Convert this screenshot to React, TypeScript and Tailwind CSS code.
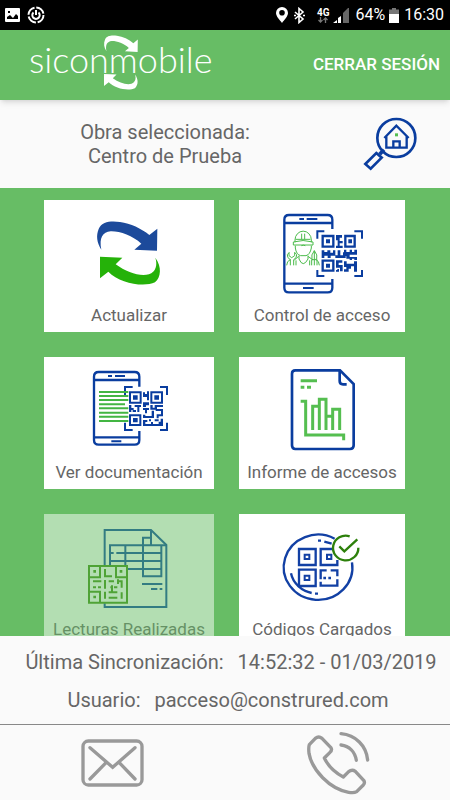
import React from 'react'

const BLUE = '#0a3d9f'
const GREEN = '#55be50'

interface IconProps {
  viewBox?: string
  children: React.ReactNode
}

function TileIcon({ viewBox = '0 0 300 285', children }: IconProps) {
  return (
    <svg viewBox={viewBox} className="h-[95px] w-[100px]" fill="none" aria-hidden="true">
      {children}
    </svg>
  )
}

const ARROW_TOP =
  'M64 134C50 112 48 92 56 72C66 48 95 48 120 51C152 56 184 70 208 90L232 71L231 137L163 134L184 116C158 92 118 78 92 79C68 82 57 98 64 134Z'
const ARROW_BOTTOM =
  'M60 155L127 158L107 178C140 202 180 216 207 208C228 200 233 180 226 158C246 186 243 216 225 232C190 248 118 234 85 200L60 220Z'

function RefreshArt() {
  return (
    <TileIcon viewBox="-3 0 300 285">
      <path d={ARROW_TOP} fill="#1c4a9b" />
      <path d={ARROW_BOTTOM} fill="#25b209" />
    </TileIcon>
  )
}

function AccessArt() {
  return (
    <TileIcon viewBox="6 0 300 285">
      <g stroke={BLUE} strokeWidth="7">
        <path d="M187 72V44q0-14-14-14H57q-14 0-14 14V248q0 14 14 14H173q14 0 14-14V222" />
        <path d="M43 54H187M43 236H187" />
        <path d="M88 42h14M110 42h32M99 249h32" strokeWidth="6" />
        <path d="M142 101V79H163M253 79H276V101M142 195V213H163M253 213H276V195" strokeWidth="6" />
        <path d="M158 93h32v32h-32zM226 93h28v32h-28zM158 167h32v30h-32z" />
      </g>
      <g fill={BLUE}>
        <path d="M168 103h12v12h-12zM235 103h11v12h-11zM168 176h12v12h-12z" />
        <path d="M198 90h18v8h-7v10h9v7h-9v7h9v7h-20v-7h5v-16h-5z" />
        <path d="M155 136h8v5h9v-5h9v7h8v-7h7v15h7v-15h8v15h8v-9h8v17h-31v-7h-14v7h-9v-7h-10v7h-8z" />
        <path d="M222 134h7v7h10v-7h7v7h7v-7h8v15h-22v7h22v9h-8v-4h-7v4h-7v-4h-10v-8h-7z" />
        <path d="M198 166h19v7h-11v7h12v19h-8v-11h-12z" />
        <path d="M222 169h8v7h22v-7h9v31h-9v-16h-9v7h-7v9h-14v-7h7v-7h-7z" />
        <path d="M202 192h5v8h-9v-5h4z" />
      </g>
      <g stroke="#4bbb4b" strokeWidth="3">
        <path d="M75 112V105a24 26 0 0 1 49 0v7M70 111q29-9 59 0v9H70z" />
        <path d="M95 86v17M104 86v17M77 103h44M94 122q6-3 12 0" />
        <path d="M76 122v7q3 20 16 23h16q12-3 16-23v-7" />
        <path d="M87 152v10q12 28 27 0v-10M86 154l-13 11M114 154l15 11" />
        <path d="M57 143v9l8 6 9-6v-10l6 7q1 10-9 15v17M61 181v-17q-10-5-9-15l6-7" />
        <path d="M133 137q11 12 7 27h-14q-4-15 7-27v44M125 164v17M141 164v17" />
        <path d="M50 181q0-13 12-18M148 181q0-13-11-18M78 166v15M119 166v15" />
      </g>
    </TileIcon>
  )
}

function DocumentArt() {
  return (
    <TileIcon viewBox="-3 0 300 285">
      <g stroke={BLUE} strokeWidth="7">
        <path d="M178 74V44q0-14-14-14H56q-14 0-14 14V234q0 14 14 14H164q14 0 14-14V207" />
        <path d="M42 54H178M42 226H178" />
        <path d="M84 42h12M105 42h30M94 238h30" strokeWidth="6" />
        <path d="M135 99V75H158M240 75H261V99M135 182V204H158M240 204H261V182" strokeWidth="6" />
      </g>
      <path
        d="M57 90h88M57 102h88M57 114h88M57 127h78M57 139h88M57 152h88M57 164h88M57 177h88"
        stroke="#43b543"
        strokeWidth="6"
      />
      <path d="M150 91h32v31h-32zM214 91h32v31h-32zM150 160h31v29h-31z" stroke={BLUE} strokeWidth="6" />
      <g fill={BLUE}>
        <path d="M159 100h14v13h-14zM223 100h14v13h-14zM159 168h14v13h-14z" />
        <path d="M189 91h6v5h6v-8h6v27h-6v-10h-12zM189 121h18v9h-9v5h-9z" />
        <path d="M147 129h7v9h7v6h-7v6h-7zM164 129h19v6h-5v15h-6v-15h-8zM158 144h10v6h-10z" />
        <path d="M189 138h18v6h-6v10h-6v-10h-6zM211 129h7v8h6v-8h25v6h-18v8h-20z" />
        <path d="M189 158h7v4h19v-16h7v22h-33zM227 141h22v22h-13v6h-6v-12h13v-10h-16z" />
        <path d="M189 174h13v6h-6v6h17v-6h6v6h17v-7h6v-9h7v22h-60zM207 172h6v6h-6zM224 172h12v6h-12z" />
      </g>
    </TileIcon>
  )
}

function ReportArt() {
  return (
    <TileIcon viewBox="6 0 300 285">
      <g stroke={BLUE} strokeWidth="8">
        <path d="M76 25H210L251 66V250q0 11-11 11H76q-10 0-10-11V35q0-10 10-10z" />
        <path d="M209 27V57q0 10 10 10H230" />
      </g>
      <g stroke={GREEN} strokeWidth="9">
        <path d="M92 56h49M92 76h11M111 76h12" />
        <path d="M92 118H107V219H221V235" />
        <path d="M128 204V133H148M148 204V112H168V204M168 163H188M188 204V142H209V204" />
      </g>
    </TileIcon>
  )
}

function ReadingsArt() {
  return (
    <TileIcon viewBox="117 27 300 285">
      <g stroke="#003d9f" strokeWidth="6">
        <path d="M194 166V60H333L379 105V291H194V280" />
        <path d="M210 166V106H379M333 60V106M333 83H309V199H364V106" />
        <path d="M256 106V166M210 129h11M229 129H364M210 153H364M262 177H364" />
        <path d="M306 222h61M333 237h19M359 237h8" />
      </g>
      <g stroke="#398a09" strokeWidth="6">
        <path d="M147 168H261V278H147zM147 202H180V168M261 202H228V168M147 245H180V278" />
        <path d="M195 177V199H216M159 214H184M195 210V236M206 214H222M234 208V222M216 226V250M195 245V266M206 263H232M245 214V233M159 232H168M174 232H183M222 232H232M211 232H216M245 247V266M206 247H232M231 214H248" />
      </g>
      <g fill="#398a09">
        <path d="M160 180h8v8h-8zM239 180h8v8h-8zM160 257h8v8h-8z" />
      </g>
    </TileIcon>
  )
}

function CodesArt() {
  return (
    <TileIcon viewBox="111 27 300 285">
      <g stroke="#1240a4" strokeWidth="7">
        <path d="M299 86A103 98 0 1 0 351 157" />
        <path d="M168 190C174 220 200 243 230 249M240 251h9M249 92h9M268 95l22 6" />
        <path d="M192 117H242V165H192zM192 179H242V228H192z" />
        <path d="M293 117H257V165H307V150" />
        <path d="M209 134h14v13h-14zM276 134h13v13h-13zM209 197h14v13h-14z" strokeWidth="6" />
        <path d="M257 208V181H275M287 181H307V199M257 215V227H307V208M265 204h8M280 204h8" />
      </g>
      <g stroke="#2d800b" strokeWidth="7">
        <path d="M344 79A38 37 0 1 0 370 113" />
        <path d="M313 109L328 124L367 88" />
      </g>
    </TileIcon>
  )
}

function StatusBar() {
  return (
    <div className="flex h-[30px] shrink-0 items-center justify-between bg-black pr-1.5 pl-[5px] text-white">
      <div className="flex items-center gap-[7px]">
        <svg viewBox="0 0 15 14" className="h-3.5 w-[15px]" aria-hidden="true">
          <path
            fillRule="evenodd"
            fill="#fff"
            d="M1 0h13a1 1 0 0 1 1 1v12a1 1 0 0 1-1 1H1a1 1 0 0 1-1-1V1a1 1 0 0 1 1-1zM2 11h11V8l-2-2-3 4-3-3-3 2zM3 3h2v2H3z"
          />
        </svg>
        <svg viewBox="0 0 18 18" className="h-[18px] w-[18px]" fill="none" stroke="#fff" aria-hidden="true">
          <circle cx="9" cy="9" r="7.5" strokeWidth="2" strokeDasharray="10 1.8" />
          <path d="M6.5 6.5a3.7 3.7 0 1 0 5 0M9 4v5" strokeWidth="2" />
        </svg>
      </div>
      <div className="flex items-center">
        <svg viewBox="0 0 12 16" className="mr-1.5 h-4 w-3" aria-hidden="true">
          <path
            fillRule="evenodd"
            fill="#fff"
            d="M6 0a6 6 0 0 1 6 6c0 3.500-4 7-6 10C4 13 0 9.500 0 6a6 6 0 0 1 6-6zM6 3a2.800 2.800 0 1 0 0 5.600A2.800 2.800 0 0 0 6 3z"
          />
        </svg>
        <svg viewBox="0 0 11 17" className="mr-3 h-[17px] w-[11px]" fill="none" stroke="#fff" strokeWidth="1.6" aria-hidden="true">
          <path d="M1 5l8 7-4 3.500V1.500L9 5l-8 7M0 8.500h2M9 8.500h2" />
        </svg>
        <div className="mr-1 flex flex-col items-center">
          <span className="text-[10px] leading-[9px] font-bold">4G</span>
          <svg viewBox="0 0 10 6" className="h-1.5 w-2.5" fill="none" stroke="#777" strokeWidth="1.300" aria-hidden="true">
            <path d="M2.500 0v5M.500 3l2 2 2-2M7.500 6V1M5.500 3l2-2 2 2" />
          </svg>
        </div>
        <svg viewBox="0 0 16 15" className="mr-1.5 h-[15px] w-4" aria-hidden="true">
          <path fill="#fff" d="M0 15l4-3v3zM5 15v-5l3-2v7z" />
          <path fill="#666" d="M10 15V5l5-5h1v15z" />
        </svg>
        <span className="mr-1 text-base leading-5">64%</span>
        <svg viewBox="0 0 10 15" className="mr-[5px] h-[15px] w-2.5" aria-hidden="true">
          <path fill="#777" d="M3 0h4v1.500h3V6H0V1.500h3z" />
          <path fill="#fff" d="M0 6h10v9H0z" />
        </svg>
        <span className="text-base leading-5">16:30</span>
      </div>
    </div>
  )
}

function Logo() {
  return (
    <div className="relative mt-[5px] flex h-14 items-center self-start pb-2">
      <span className="font-[Lato,sans-serif] text-[36px] leading-10 font-light">siconmobile</span>
      <svg
        viewBox="306 105 105 168"
        className="absolute top-0 left-1/2 h-14 w-[35px] -translate-x-1/2"
        fill="#fff"
        aria-hidden="true"
      >
        <path d={ARROW_TOP} transform="translate(279 79) scale(.56)" />
        <path d={ARROW_BOTTOM} transform="translate(274 135) scale(.56)" />
      </svg>
    </div>
  )
}

interface Tile {
  label: string
  art: React.ReactNode
  disabled?: boolean
}

const tiles: Tile[] = [
  { label: 'Actualizar', art: <RefreshArt /> },
  { label: 'Control de acceso', art: <AccessArt /> },
  { label: 'Ver documentación', art: <DocumentArt /> },
  { label: 'Informe de accesos', art: <ReportArt /> },
  { label: 'Lecturas Realizadas', art: <ReadingsArt />, disabled: true },
  { label: 'Códigos Cargados', art: <CodesArt /> },
]

function TileButton({ label, art, disabled }: Tile) {
  return (
    <button
      type="button"
      disabled={disabled}
      className="flex flex-col items-center bg-white pt-[5px] pb-0.5 disabled:opacity-50"
    >
      {art}
      <span className="text-[17px] leading-[30px] whitespace-nowrap">{label}</span>
    </button>
  )
}

export default function App() {
  return (
    <div className="flex h-screen flex-col overflow-hidden bg-[#fafafa] font-[Roboto,sans-serif] text-[#666]">
      <StatusBar />
      <header className="z-10 flex h-[70px] shrink-0 items-center justify-between bg-[#67bd65] pr-2.5 pl-[29px] text-white shadow-md">
        <Logo />
        <button type="button" className="text-[17px] font-medium">
          CERRAR SESIÓN
        </button>
      </header>

      <section className="flex h-[88px] shrink-0 items-center pr-[30px]">
        <p className="flex-1 pr-[30px] text-center text-xl leading-6">
          Obra seleccionada:
          <br />
          Centro de Prueba
        </p>
        <button type="button" aria-label="Buscar obra">
          <svg viewBox="60 26 180 180" className="h-[60px] w-[60px]" fill="none" stroke={BLUE} strokeWidth="8" aria-hidden="true">
            <circle cx="169" cy="98" r="57" />
            <path d="M133 98L169 61L206 98M139 92V127H200V92" strokeWidth="7" />
            <path d="M160 127V108H179V127" strokeWidth="7" />
            <path d="M165 84h9v9h-9z" fill={GREEN} stroke="none" />
            <path d="M132 133L119 147" strokeWidth="11" />
            <path d="M109 143L125 157L92 190L76 176Z" />
          </svg>
        </button>
      </section>

      <main className="grid min-h-0 flex-1 grid-cols-[170fr_166fr] content-start gap-[25px] overflow-hidden bg-[#67bd65] pt-3 pr-[45px] pl-11">
        {tiles.map((tile) => (
          <TileButton key={tile.label} {...tile} />
        ))}
      </main>

      <footer className="shrink-0">
        <dl className="flex flex-col gap-3.5 pt-3.5 pb-3 text-xl leading-6 whitespace-nowrap">
          <div className="flex justify-center gap-3.5 pl-3">
            <dt>Última Sincronización:</dt>
            <dd>14:52:32 - 01/03/2019</dd>
          </div>
          <div className="flex justify-center gap-3.5 pl-1.5">
            <dt>Usuario:</dt>
            <dd>pacceso@construred.com</dd>
          </div>
        </dl>
        <nav className="grid h-[76px] grid-cols-2 border-t border-[#888]">
          <button type="button" aria-label="Enviar correo" className="flex items-center justify-center">
            <svg viewBox="33 55 189 144" className="h-12 w-[63px]" fill="none" stroke="#999" strokeWidth="10" strokeLinecap="round" aria-hidden="true">
              <rect x="39" y="61" width="177" height="132" rx="16" />
              <path d="M60 81L128 140L195 81M60 175L106 128M195 175L150 128" />
            </svg>
          </button>
          <button type="button" aria-label="Llamar" className="flex items-center justify-center">
            <svg
              viewBox="706 31 192 192"
              className="h-16 w-16"
              fill="none"
              stroke="#999"
              strokeWidth="10"
              strokeLinecap="round"
              strokeLinejoin="round"
              aria-hidden="true"
            >
              <path d="M734 53Q744 45 754 53L780 80Q786 88 778 95L761 112Q778 148 818 169L834 153Q844 145 854 152L879 179Q884 186 878 193L858 213Q850 218 834 215C776 204 724 148 715 98Q713 80 716 72Z" />
              <path d="M811 39C855 43 887 75 891 118M811 73C836 76 853 94 857 119" />
            </svg>
          </button>
        </nav>
      </footer>
    </div>
  )
}
